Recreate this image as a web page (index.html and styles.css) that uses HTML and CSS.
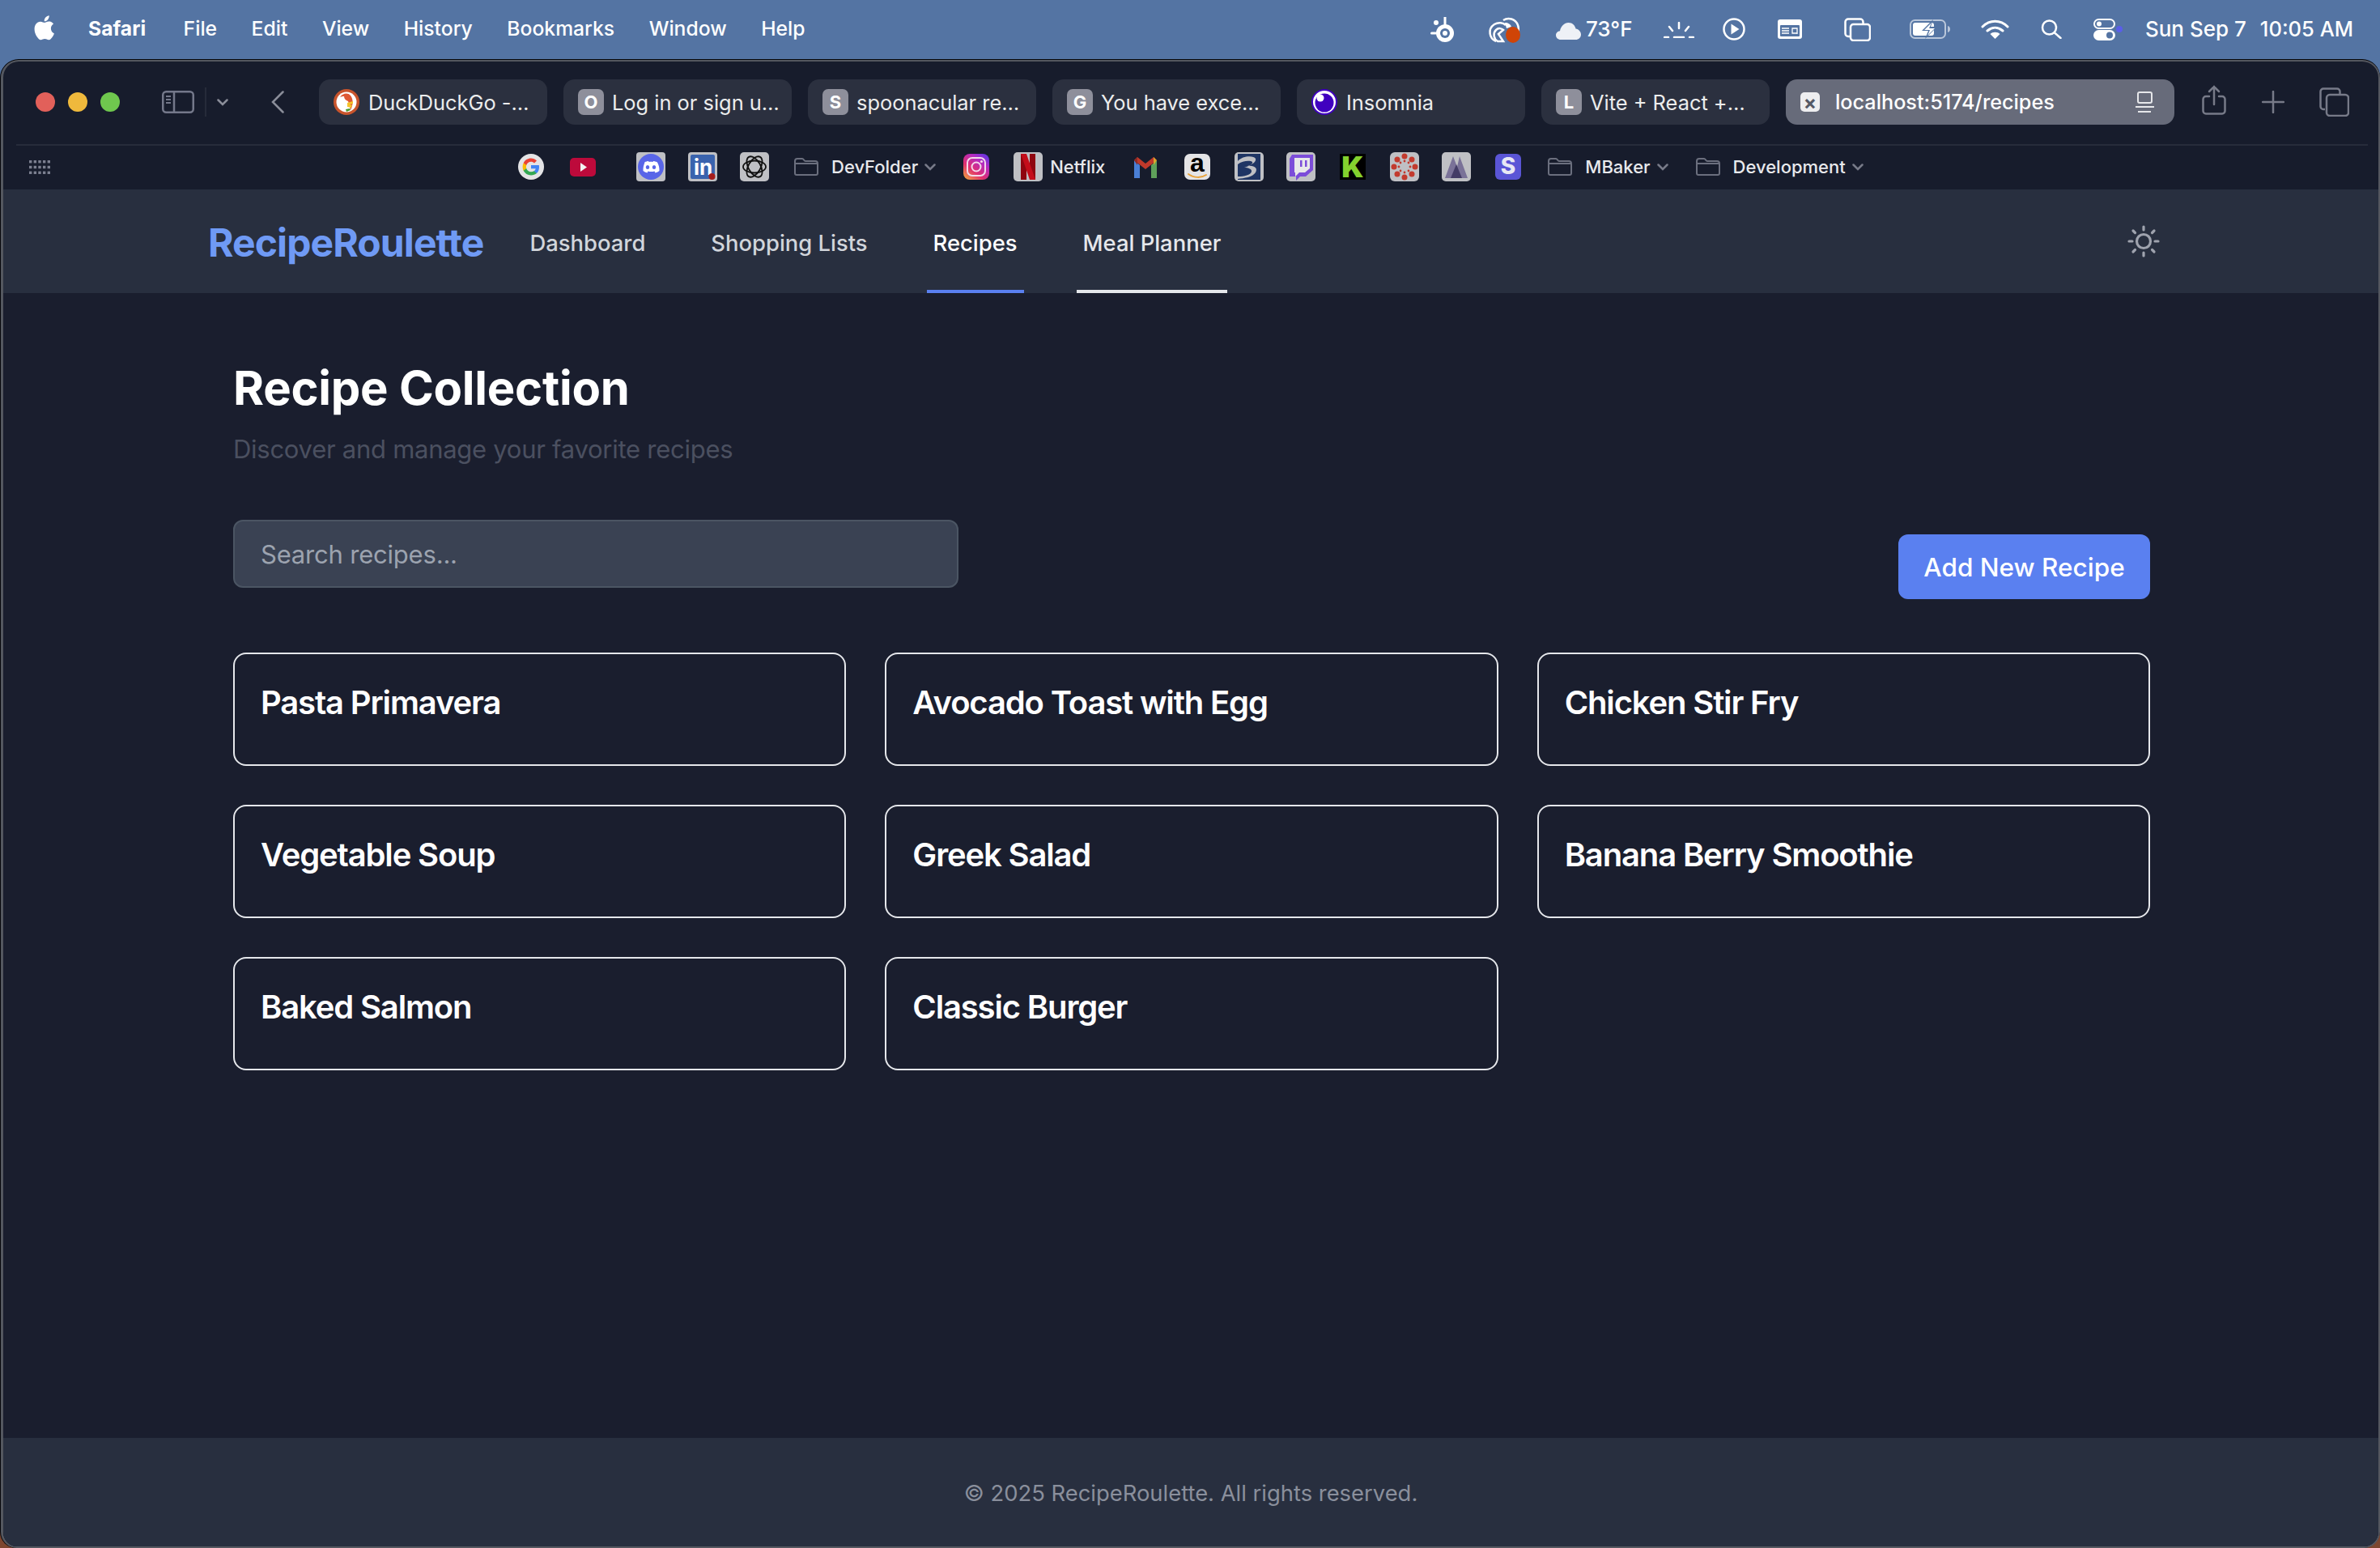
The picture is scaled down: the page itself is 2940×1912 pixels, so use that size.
FILE: index.html
```html
<!DOCTYPE html>
<html lang="en">
<head>
<meta charset="utf-8">
<title>RecipeRoulette</title>
<link rel="stylesheet" href="styles.css">
</head>
<body>
<header class="menubar">
  <svg class="apple" viewBox="2.8 2 18 20.2"><path fill="#fff" d="M18.71 19.5c-.83 1.24-1.71 2.45-3.05 2.47-1.34.03-1.77-.79-3.29-.79-1.53 0-2 .77-3.27.82-1.31.05-2.3-1.32-3.14-2.53C4.25 17 2.94 12.45 4.7 9.39c.87-1.52 2.43-2.48 4.12-2.51 1.28-.02 2.5.87 3.29.87.78 0 2.26-1.07 3.81-.91.65.03 2.47.26 3.64 1.98-.09.06-2.17 1.28-2.15 3.81.03 3.02 2.65 4.03 2.68 4.04-.03.07-.42 1.44-1.38 2.83M13 3.5c.73-.83 1.94-1.46 2.94-1.5.13 1.17-.34 2.35-1.04 3.19-.69.85-1.83 1.51-2.95 1.42-.15-1.15.41-2.35 1.05-3.11z"/></svg>
  <nav class="menu">
    <span class="menu-app">Safari</span><span>File</span><span>Edit</span><span>View</span><span>History</span><span>Bookmarks</span><span>Window</span><span>Help</span>
  </nav>
  <div class="status">
    <svg class="st st-steel" viewBox="0 0 31 32"><circle cx="18" cy="20" r="11" fill="#fff"/><circle cx="18" cy="20" r="6" fill="#5474a3"/><circle cx="18" cy="20" r="3" fill="#fff"/><rect x="16.5" y="0" width="3" height="10" fill="#fff"/><circle cx="7" cy="7" r="3" fill="#fff"/><rect x="0" y="18.500" width="8" height="3" rx="1.500" fill="#fff"/></svg>
    <svg class="st st-cc" viewBox="0 0 41 32"><g fill="none" stroke="#fff" stroke-width="2.500"><path d="M10 30C2 27-1 15 8 9c5-3 11-2 14 1"/><path d="M12 30c-5-3-6-10-2-14 3-3 7-2 9 0l-6 5 6 9z"/><path d="M19 4c6-4 15-2 18 6 1 3 1 6 0 8"/></g><path fill="#fff" d="M21 7c4 0 7 2 8 5l-6 2z"/><ellipse cx="31" cy="22" rx="9" ry="10" fill="#cf4407"/></svg>
    <svg class="st st-cloud" viewBox="0 0 31 21"><path fill="#eef1f6" d="M6 21c-3.500 0-6-2.500-6-5.500 0-3 2.200-5 5-5.300C6 4.500 10.500 0 15.500 0c5 0 8 3.500 9 7.500 3.500.5 6.500 3.500 6.500 7 0 4-3 6.500-6.500 6.500z"/></svg>
    <span class="st-temp">73°F</span>
    <svg class="st st-bright" viewBox="0 0 38 20" fill="none" stroke="#fff" stroke-width="2.500" stroke-linecap="round"><path d="M19 1v7M7 6l4 5M31 6l-4 5M1 19h5M13 19h12M32 19h5"/></svg>
    <svg class="st st-play" viewBox="0 0 28 28"><circle cx="14" cy="14" r="12.500" fill="none" stroke="#fff" stroke-width="2.500"/><path fill="#fff" d="M10.500 7.500l10 6.500-10 6.500z"/></svg>
    <svg class="st st-cmd" viewBox="0 0 30 24"><rect width="30" height="24" rx="3" fill="#fff"/><rect x="3" y="7" width="24" height="14" rx="1" fill="#5474a3"/><path stroke="#fff" stroke-width="1.600" d="M5 11h9M5 14h9M5 17h9"/><path fill="none" stroke="#fff" stroke-width="1.300" d="M18 11h6v6h-6zM18 11v-.5M24 17v1"/></svg>
    <svg class="st st-copy" viewBox="0 0 33 29" fill="none" stroke="#fff" stroke-width="2.500"><path d="M7 23H5a3.500 3.500 0 0 1-3.500-3.500V5A3.500 3.500 0 0 1 5 1.500h15A3.500 3.500 0 0 1 23.500 5v2"/><rect x="8" y="8" width="24" height="20" rx="3.500"/></svg>
    <svg class="st st-batt" viewBox="0 0 50 24"><rect x="1" y="1" width="43" height="22" rx="5.500" fill="none" stroke="#b9c6da" stroke-width="2"/><rect x="4" y="4" width="26" height="16" rx="3" fill="#fff"/><path d="M47 8c2 .5 3 2 3 4s-1 3.500-3 4z" fill="#b9c6da"/><path fill="#5474a3" d="M29 0L15 14h8l-4 10 15-15h-8z"/><path fill="#fff" d="M27 4l-9 9h7l-3 7 9-9h-7z"/></svg>
    <svg class="st st-wifi" viewBox="0 0 35 24" fill="none" stroke="#fff" stroke-width="3" stroke-linecap="round"><path d="M2 9c9-9 22-9 31 0M8 14c6-5 13-5 19 0"/><path fill="#fff" stroke="none" d="M17.500 24l-6-6c3-3 9-3 12 0z"/></svg>
    <svg class="st st-search" viewBox="0 0 26 24" fill="none" stroke="#fff" stroke-width="2.500" stroke-linecap="round"><circle cx="10.500" cy="10" r="8.500"/><path d="M17 16.500l7.500 6.500"/></svg>
    <svg class="st st-ctrl" viewBox="0 0 36 27"><rect x="1" y="1" width="25" height="11" rx="5.500" fill="none" stroke="#fff" stroke-width="2"/><circle cx="7" cy="6.500" r="3" fill="#fff"/><rect y="14" width="27" height="13" rx="6.500" fill="#fff"/><circle cx="20" cy="20.500" r="4" fill="#5474a3"/><circle cx="32" cy="13" r="4" fill="#5a5ee8"/></svg>
    <span class="st-date">Sun Sep 7</span>
    <span class="st-time">10:05 AM</span>
  </div>
</header>

<div class="window">
  <div class="toolbar">
    <span class="light light-r"></span><span class="light light-y"></span><span class="light light-g"></span>
    <svg class="tb-sidebar" viewBox="0 0 40 28" fill="none" stroke="#74788a" stroke-width="2.500"><rect x="1.250" y="1.250" width="37.500" height="25.500" rx="4"/><path d="M15 1v26"/><path stroke-width="1.800" d="M5 7h6M5 11h6M5 15h6"/></svg>
    <span class="tb-divider"></span>
    <svg class="tb-chev" viewBox="0 0 14 9" fill="none" stroke="#8a8d99" stroke-width="2.500" stroke-linecap="round"><path d="M1.500 1.500L7 7l5.500-5.500"/></svg>
    <svg class="tb-back" viewBox="0 0 16 28" fill="none" stroke="#8a8d99" stroke-width="2.500" stroke-linecap="round"><path d="M14.500 1.500L2 14l12.500 12.500"/></svg>
    <div class="tabs">
      <div class="tab">
        <svg class="favicon" viewBox="0 0 32 32"><circle cx="16" cy="16" r="16" fill="#c8542c"/><circle cx="16" cy="16" r="12.500" fill="#fff"/><path fill="#de5833" d="M8 10c3-5 10-6 13-2 4 5 3 13 0 18-1-5-2-8-3-11-3-1-5-3-5-6-2 0-3 0-5 1z"/><path fill="#f5c32c" d="M17 17l7-2v3l-4 1 3 1-1 3-5-1z"/><path fill="#4a9a2e" d="M15 25l5-1 1 2-5 2z"/></svg>
        <span class="tab-text">DuckDuckGo -…</span>
      </div>
      <div class="tab"><span class="letter">O</span><span class="tab-text">Log in or sign u…</span></div>
      <div class="tab"><span class="letter">S</span><span class="tab-text">spoonacular re…</span></div>
      <div class="tab"><span class="letter">G</span><span class="tab-text">You have exce…</span></div>
      <div class="tab">
        <svg class="favicon" viewBox="0 0 32 32"><circle cx="16" cy="16" r="15" fill="#fff" stroke="#4000bf" stroke-width="2"/><circle cx="16" cy="17" r="11.500" fill="#4000bf"/><circle cx="11" cy="11" r="4.500" fill="#fff"/></svg>
        <span class="tab-text">Insomnia</span>
      </div>
      <div class="tab"><span class="letter">L</span><span class="tab-text">Vite + React +…</span></div>
      <div class="tab tab-active">
        <span class="letter-x">×</span>
        <span class="tab-text tab-url">localhost:5174/recipes</span>
        <svg class="reader" viewBox="0 0 23 27" fill="none" stroke="#e6e7ea"><rect x="3" y="1" width="17" height="13" rx="2" stroke-width="2"/><path stroke-width="2" d="M0 19h23M3 25h16"/></svg>
      </div>
    </div>
    <svg class="tb-share" viewBox="0 0 30 37" fill="none" stroke="#777a88" stroke-width="2.500" stroke-linecap="round"><path d="M9 14H5a3.500 3.500 0 0 0-3.500 3.500V32A3.500 3.500 0 0 0 5 35.500h20a3.500 3.500 0 0 0 3.500-3.500V17.500A3.500 3.500 0 0 0 25 14h-4"/><path d="M15 24V2M9 8l6-6 6 6"/></svg>
    <svg class="tb-plus" viewBox="0 0 28 28" stroke="#777a88" stroke-width="2.500" stroke-linecap="round"><path d="M14 1v26M1 14h26"/></svg>
    <svg class="tb-copy" viewBox="0 0 37 36" fill="none" stroke="#777a88" stroke-width="2.500"><path d="M7 27H5a3.500 3.500 0 0 1-3.500-3.500V5A3.500 3.500 0 0 1 5 1.500h17A3.500 3.500 0 0 1 25.500 5v3"/><rect x="9" y="9" width="27" height="26" rx="4"/></svg>
  </div>

  <div class="bookmarks">
    <svg class="bm-grid" viewBox="0 0 23 15" fill="#7c8090"><g id="gridrow"><rect x="0" y="0" width="3" height="3"/><rect x="5" y="0" width="3" height="3"/><rect x="10" y="0" width="3" height="3"/><rect x="15" y="0" width="3" height="3"/><rect x="20" y="0" width="3" height="3"/></g><use href="#gridrow" y="6"/><use href="#gridrow" y="12"/></svg>
    <div class="bm-list">
      <svg class="fav" viewBox="0 0 36 36"><circle cx="18" cy="18" r="16" fill="#e4e4e6"/><path fill="#4285f4" d="M28 18.300c0-.8-.1-1.500-.2-2.200H18v4.200h5.700c-.3 1.300-1 2.400-2.100 3.100v2.700h3.400c2-1.800 3-4.600 3-7.800z"/><path fill="#34a853" d="M18 28.500c2.800 0 5.200-.9 7-2.500l-3.400-2.700c-1 .6-2.200 1-3.600 1-2.700 0-5-1.800-5.800-4.300H8.700v2.800c1.700 3.500 5.300 5.700 9.300 5.700z"/><path fill="#fbbc05" d="M12.200 20c-.4-1.300-.4-2.700 0-4v-2.800H8.700c-1.500 3-1.500 6.600 0 9.600z"/><path fill="#ea4335" d="M18 11.800c1.500 0 2.900.5 4 1.600l3-3C23.100 8.600 20.600 7.500 18 7.500c-4 0-7.600 2.200-9.300 5.700l3.500 2.800c.8-2.500 3.100-4.200 5.800-4.200z"/></svg>
      <svg class="fav" viewBox="0 0 36 36"><rect x="2" y="7" width="32" height="23" rx="5" fill="#bd0a3b"/><path fill="#f2f2f2" d="M15 13l8 5.500-8 5.500z"/></svg>
      <svg class="fav fav-far" viewBox="0 0 36 36"><rect width="36" height="36" rx="4" fill="#bfc0c4"/><circle cx="18" cy="18" r="16" fill="#5865e8"/><path fill="#fff" d="M10 12.500c2-1 4-1.500 5-1.500l.5 1c1.500-.2 3.500-.2 5 0l.5-1c1 0 3 .5 5 1.500 2 3.500 2.700 7 2.500 10.500-2 1.500-3.500 2-5 2.500l-1-2c-2.500.7-5.500.7-8 0l-1 2c-1.500-.5-3-1-5-2.500-.2-3.500.5-7 2-10.500z"/><ellipse cx="14" cy="18.500" rx="2.200" ry="2.500" fill="#5865e8"/><ellipse cx="22" cy="18.500" rx="2.200" ry="2.500" fill="#5865e8"/></svg>
      <svg class="fav" viewBox="0 0 36 36"><rect width="36" height="36" rx="4" fill="#bfc0c4"/><rect x="3" y="3" width="30" height="30" rx="2" fill="#3a63ae"/><text x="7" y="28" class="li-text">in</text><circle cx="29.500" cy="30" r="4" fill="#a51c1c"/></svg>
      <svg class="fav" viewBox="0 0 36 36"><rect width="36" height="36" rx="5" fill="#bfc0c4"/><g fill="none" stroke="#111" stroke-width="1.800"><ellipse cx="18" cy="18" rx="14" ry="7.500"/><ellipse cx="18" cy="18" rx="14" ry="7.500" transform="rotate(60 18 18)"/><ellipse cx="18" cy="18" rx="14" ry="7.500" transform="rotate(120 18 18)"/></g></svg>
      <div class="bm-folder">
        <svg class="folder" viewBox="0 0 30 22" fill="none" stroke="#6b6f7e" stroke-width="2"><path d="M1 5V4a3 3 0 0 1 3-3h6c2 0 2 3 4 3h12a3 3 0 0 1 3 3v12a2 2 0 0 1-2 2H3a2 2 0 0 1-2-2zM1 7h28"/></svg>
        <span class="bm-text">DevFolder</span>
        <svg class="bm-chev" viewBox="0 0 14 9" fill="none" stroke="#777a88" stroke-width="2.500" stroke-linecap="round"><path d="M1.500 1.500L7 7l5.500-5.500"/></svg>
      </div>
      <svg class="fav fav-after" viewBox="0 0 36 36"><defs><linearGradient id="ig" x1="0" y1="1" x2=".8" y2="0"><stop offset="0" stop-color="#f5b03b"/><stop offset=".4" stop-color="#e0306e"/><stop offset=".75" stop-color="#b52bc0"/><stop offset="1" stop-color="#6a34e0"/></linearGradient></defs><rect x="2" y="2" width="32" height="32" rx="8" fill="url(#ig)"/><g fill="none" stroke="#f3d9ea" stroke-width="2"><rect x="7" y="7" width="22" height="22" rx="6"/><circle cx="18" cy="18" r="5.500"/></g><circle cx="24.500" cy="11.500" r="1.600" fill="#f3d9ea"/></svg>
      <div class="bm-link">
        <svg class="fav" viewBox="0 0 36 36"><rect width="36" height="36" rx="5" fill="#bfc0c4"/><path fill="#8f0610" d="M9 2h7v32H9z"/><path fill="#8f0610" d="M20 2h7v32h-7z"/><path fill="#c40d1a" d="M9 2h7l11 32h-7z"/></svg>
        <span class="bm-text">Netflix</span>
      </div>
      <svg class="fav fav-gmail" viewBox="0 0 36 36"><path fill="#4a7fd6" d="M4 32V10l7 6v16z"/><path fill="#5fa05a" d="M32 32V10l-7 6v16z"/><path fill="#c0392b" d="M4 10l14 11 14-11-4-4-10 8L8 6z"/><path fill="#8f2a25" d="M4 10l4-4v10z"/><path fill="#d9a62e" d="M32 10l-4-4v10z"/></svg>
      <svg class="fav" viewBox="0 0 36 36"><rect x="2" y="2" width="32" height="32" rx="7" fill="#e4e4e6"/><text x="18" y="24" class="amz-text">a</text><path d="M7 27c7 5 16 5 22 1" fill="none" stroke="#e8a33a" stroke-width="2" stroke-linecap="round"/></svg>
      <svg class="fav" viewBox="0 0 36 36"><rect width="36" height="36" rx="5" fill="#bfc0c4"/><rect x="4" y="2" width="28" height="32" fill="#1f3564"/><path fill="#bfc0c4" d="M4 11c6-7 20-7 22-3 1 3-3 7-10 9 9-1 13 3 10 8-4 6-14 7-22 8v-3c8 0 16-2 17-6 1-3-4-5-9-5 7-2 11-5 10-7-2-2-12-2-18 3z"/></svg>
      <svg class="fav" viewBox="0 0 36 36"><rect width="36" height="36" rx="5" fill="#bfc0c4"/><path fill="#7c4dd9" d="M7 3h26v19l-9 8h-7l-5 5v-5H4V8z"/><path fill="#e8e8ea" d="M10 7h19v13l-6 5h-7l-5 5v-5h-1z"/><path fill="#7c4dd9" d="M17 10h2.500v8H17zM23 10h2.500v8H23z"/></svg>
      <svg class="fav" viewBox="0 0 36 36"><rect x="2" y="2" width="32" height="32" fill="#000"/><text x="18" y="30.500" class="kick-text">K</text></svg>
      <svg class="fav" viewBox="0 0 36 36"><rect width="36" height="36" rx="6" fill="#bfc0c4"/><g fill="#c23a2e"><circle cx="18" cy="5" r="3.500"/><circle cx="18" cy="31" r="3.500"/><circle cx="5" cy="18" r="3.500"/><circle cx="31" cy="18" r="3.500"/><circle cx="9" cy="9" r="3.500"/><circle cx="27" cy="9" r="3.500"/><circle cx="9" cy="27" r="3.500"/><circle cx="27" cy="27" r="3.500"/><circle cx="18" cy="11" r="1.400"/><circle cx="18" cy="25" r="1.400"/><circle cx="11" cy="18" r="1.400"/><circle cx="25" cy="18" r="1.400"/><circle cx="13" cy="13" r="1.400"/><circle cx="23" cy="13" r="1.400"/><circle cx="13" cy="23" r="1.400"/><circle cx="23" cy="23" r="1.400"/></g></svg>
      <svg class="fav" viewBox="0 0 36 36"><rect width="36" height="36" rx="5" fill="#bfc0c4"/><path fill="#7a7298" d="M4 32L14 5l5 13 3-13 10 27z"/><path fill="#433c66" d="M11 32l7-17 7 17z"/></svg>
      <svg class="fav" viewBox="0 0 36 36"><rect x="2" y="2" width="32" height="32" rx="6" fill="#5a55d6"/><text x="18" y="27" class="stripe-text">S</text></svg>
      <div class="bm-folder bm-folder-m">
        <svg class="folder" viewBox="0 0 30 22" fill="none" stroke="#6b6f7e" stroke-width="2"><path d="M1 5V4a3 3 0 0 1 3-3h6c2 0 2 3 4 3h12a3 3 0 0 1 3 3v12a2 2 0 0 1-2 2H3a2 2 0 0 1-2-2zM1 7h28"/></svg>
        <span class="bm-text">MBaker</span>
        <svg class="bm-chev" viewBox="0 0 14 9" fill="none" stroke="#777a88" stroke-width="2.500" stroke-linecap="round"><path d="M1.500 1.500L7 7l5.500-5.500"/></svg>
      </div>
      <div class="bm-folder bm-folder-d">
        <svg class="folder" viewBox="0 0 30 22" fill="none" stroke="#6b6f7e" stroke-width="2"><path d="M1 5V4a3 3 0 0 1 3-3h6c2 0 2 3 4 3h12a3 3 0 0 1 3 3v12a2 2 0 0 1-2 2H3a2 2 0 0 1-2-2zM1 7h28"/></svg>
        <span class="bm-text">Development</span>
        <svg class="bm-chev" viewBox="0 0 14 9" fill="none" stroke="#777a88" stroke-width="2.500" stroke-linecap="round"><path d="M1.500 1.500L7 7l5.500-5.500"/></svg>
      </div>
    </div>
  </div>

  <div class="app">
    <div class="app-header">
      <span class="logo">RecipeRoulette</span>
      <nav class="app-nav">
        <a class="nav-link">Dashboard</a>
        <a class="nav-link">Shopping Lists</a>
        <a class="nav-link nav-current">Recipes</a>
        <a class="nav-link nav-hover">Meal Planner</a>
      </nav>
      <svg class="sun" viewBox="0 0 40 40" fill="none" stroke="#9fa3ae" stroke-width="3.200" stroke-linecap="round"><circle cx="20" cy="20" r="8.500"/><path d="M20 2v4M20 34v4M2 20h4M34 20h4M7 7l2.500 2.500M30.500 30.500L33 33M7 33l2.500-2.500M30.500 9.500L33 7"/></svg>
    </div>
    <main class="content">
      <h1 class="title">Recipe Collection</h1>
      <p class="subtitle">Discover and manage your favorite recipes</p>
      <div class="actions">
        <input class="search" type="text" placeholder="Search recipes...">
        <button class="add-btn" type="button">Add New Recipe</button>
      </div>
      <div class="grid">
        <article class="card"><h3 class="card-title">Pasta Primavera</h3></article>
        <article class="card"><h3 class="card-title">Avocado Toast with Egg</h3></article>
        <article class="card"><h3 class="card-title">Chicken Stir Fry</h3></article>
        <article class="card"><h3 class="card-title">Vegetable Soup</h3></article>
        <article class="card"><h3 class="card-title">Greek Salad</h3></article>
        <article class="card"><h3 class="card-title">Banana Berry Smoothie</h3></article>
        <article class="card"><h3 class="card-title">Baked Salmon</h3></article>
        <article class="card"><h3 class="card-title">Classic Burger</h3></article>
      </div>
    </main>
    <footer class="app-footer">© 2025 RecipeRoulette. All rights reserved.</footer>
  </div>
</div>
</body>
</html>
```

FILE: styles.css
```css
* { box-sizing: border-box; }
html, body { height: 100%; }
body {
  margin: 0;
  height: 1912px;
  overflow: hidden;
  display: flex;
  flex-direction: column;
  font-family: Inter, "Liberation Sans", sans-serif;
  background: linear-gradient(#5474a3 0 1800px, #7d4630 1800px);
}
svg { display: block; flex: none; }

/* macOS menu bar */
.menubar {
  height: 74px;
  flex: none;
  display: flex;
  align-items: center;
  padding: 0 33px 4px 41px;
  background: #5474a3;
  color: #fff;
  font-size: 24.700px;
  font-weight: 500;
}
.apple { width: 27px; height: 31px; margin-top: -1px; }
.menu { display: flex; gap: 42.500px; margin-left: 41px; }
.menu-app { font-weight: 700; margin-right: 4px; }
.status { margin-left: auto; display: flex; align-items: center; font-size: 26px; }
.st-steel { width: 31px; height: 32px; margin-top: 3px; }
.st-cc { width: 41px; height: 32px; margin-left: 40px; margin-top: 3px; }
.st-cloud { width: 31px; height: 21px; margin-left: 43px; margin-top: 6px; }
.st-temp { margin-left: 6px; width: 57px; }
.st-bright { width: 38px; height: 20px; margin-left: 39px; margin-top: 3px; }
.st-play { width: 28px; height: 28px; margin-left: 35px; margin-top: 2px; }
.st-cmd { width: 30px; height: 24px; margin-left: 40px; margin-top: 2px; }
.st-copy { width: 33px; height: 29px; margin-left: 52px; margin-top: 3px; }
.st-batt { width: 50px; height: 24px; margin-left: 48px; margin-top: 2px; }
.st-wifi { width: 35px; height: 24px; margin-left: 38px; margin-top: 2px; }
.st-search { width: 26px; height: 24px; margin-left: 39px; margin-top: 2px; }
.st-ctrl { width: 36px; height: 27px; margin-left: 39px; margin-top: 2px; }
.st-date { margin-left: 28px; }
.st-time { margin-left: 17px; font-size: 25.500px; }

/* Safari window */
.window {
  flex: 1;
  min-height: 0;
  margin-left: 1px;
  display: flex;
  flex-direction: column;
  overflow: hidden;
  background: #171c2c;
  border: solid #54575f;
  border-width: 2px 2px 2px 3px;
  border-radius: 22px 22px 20px 20px;
  box-shadow: 0 -1px 0 #05060a, -1px 0 0 #05060a;
}
.toolbar {
  flex: none;
  height: 104px;
  margin: 0 13px 0 16px;
  padding: 0 0 2px 24px;
  display: flex;
  align-items: center;
  border-bottom: 2px solid #272c3b;
}
.light { width: 24px; height: 24px; border-radius: 50%; margin-right: 16px; flex: none; }
.light-r { background: #e2605a; }
.light-y { background: #efb93c; }
.light-g { background: #6fc74e; }
.tb-sidebar { width: 40px; height: 28px; margin-left: 36px; }
.tb-divider { width: 2px; height: 36px; margin-left: 13px; background: #262b3a; }
.tb-chev { width: 14px; height: 9px; margin-left: 13px; }
.tb-back { width: 16px; height: 28px; margin-left: 53px; }
.tabs { display: flex; gap: 20px; margin-left: 43px; }
.tab {
  width: 282px;
  height: 56px;
  padding-left: 18px;
  display: flex;
  align-items: center;
  gap: 11px;
  border-radius: 14px;
  background: #2b303f;
  color: #eceded;
  font-size: 25.400px;
}
.tab-text { white-space: nowrap; }
.favicon { width: 32px; height: 32px; }
.letter {
  width: 32px;
  height: 32px;
  flex: none;
  display: flex;
  align-items: center;
  justify-content: center;
  margin-right: -1px;
  border-radius: 7px;
  background: #8e8f9b;
  color: #fff;
  font-size: 22px;
  font-weight: 700;
}
.tab-active { width: 480px; background: #676b7a; color: #fff; gap: 19px; }
.letter-x {
  width: 24px;
  height: 24px;
  flex: none;
  display: flex;
  align-items: center;
  justify-content: center;
  border-radius: 5px;
  background: #eeeef0;
  color: #555966;
  font-size: 24px;
  font-weight: 700;
}
.tab-url { font-weight: 500; font-size: 25.200px; }
.reader { width: 23px; height: 27px; margin-left: auto; margin-right: 25px; }
.tb-share { width: 30px; height: 37px; margin-left: 34px; margin-top: -6px; }
.tb-plus { width: 28px; height: 28px; margin-left: 44px; }
.tb-copy { width: 37px; height: 36px; margin-left: 43px; }

/* Favorites bar */
.bookmarks {
  flex: none;
  height: 54px;
  padding: 0 0 2px 32px;
  display: flex;
  align-items: center;
  color: #e8e9ec;
}
.bm-grid { width: 26px; height: 17px; }
.bm-list { margin-left: 576px; display: flex; align-items: center; gap: 28px; }
.fav { width: 36px; height: 36px; overflow: visible; }
.fav-far { margin-left: 20px; }
.fav-after { margin-left: 4px; }
.fav-gmail { margin-left: 4px; }
.bm-folder, .bm-link { display: flex; align-items: center; }
.bm-folder { margin-left: 3px; }
.bm-folder-m { margin-left: 3px; }
.bm-folder-d { margin-left: 6px; }
.folder { width: 30px; height: 22px; margin-right: 16px; }
.bm-text { font-size: 22px; font-weight: 500; white-space: nowrap; }
.bm-link .bm-text { margin-left: 9px; }
.bm-chev { width: 14px; height: 9px; margin-left: 8px; }
.li-text { font: 700 26px Inter, sans-serif; fill: #fff; }
.amz-text { font: 700 32px "Liberation Sans", sans-serif; fill: #000; text-anchor: middle; }
.kick-text { font: 900 36px Inter, sans-serif; fill: #84d12e; text-anchor: middle; }
.stripe-text { font: 800 28px Inter, sans-serif; fill: #e8e8f4; text-anchor: middle; }

/* RecipeRoulette app */
.app { flex: 1; min-height: 0; display: flex; flex-direction: column; background: #1a1e2e; }
.app-header {
  flex: none;
  height: 128px;
  padding: 0 270px 0 253px;
  display: flex;
  align-items: center;
  background: #282f3f;
}
.logo { font-size: 48px; font-weight: 700; color: #6f9af5; letter-spacing: -.9px; margin-top: 2px; }
.app-nav { display: flex; align-self: stretch; gap: 65px; margin-left: 49px; }
.nav-link {
  display: flex;
  align-items: center;
  padding: 8px 8px 0;
  border-bottom: 4px solid transparent;
  color: #d1d5db;
  font-size: 27.400px;
  font-weight: 500;
}
.nav-current { color: #fff; border-bottom-color: #5a80f0; }
.nav-hover { color: #e5e7eb; border-bottom-color: #e5e7eb; }
.sun { width: 40px; height: 40px; margin-left: auto; }

.content { flex: 1; min-height: 0; padding: 81px 282px 0 284px; }
.title { margin: 0; font-size: 58px; line-height: 72px; font-weight: 700; color: #fff; letter-spacing: -.25px; }
.subtitle { margin: 16px 0 0; font-size: 31px; line-height: 48px; color: #4b5060; letter-spacing: -.27px; }
.actions {
  margin-top: 63px;
  display: flex;
  justify-content: space-between;
  align-items: flex-end;
}
.search {
  width: 896px;
  height: 84px;
  margin-bottom: 14px;
  padding: 0 32px;
  border: 2px solid #4b5563;
  border-radius: 12px;
  background: #3a4253;
  color: #fff;
  font: 400 31px Inter, sans-serif;
  letter-spacing: -.2px;
}
.search::placeholder { color: #9ca3af; opacity: 1; }
.add-btn {
  width: 311px;
  height: 80px;
  border: 0;
  border-radius: 12px;
  background: #5a80f0;
  color: #fff;
  font: 500 31.500px Inter, sans-serif;
}
.grid {
  margin-top: 66px;
  display: grid;
  grid-template-columns: repeat(3, 1fr);
  gap: 48px;
}
.card {
  height: 140px;
  padding: 32px 32px 0;
  border: 2px solid #e5e7eb;
  border-radius: 16px;
}
.card-title { margin: 0; font-size: 40px; line-height: 56px; font-weight: 600; color: #fff; letter-spacing: -1.150px; }
.app-footer {
  flex: none;
  height: 134px;
  display: flex;
  align-items: center;
  justify-content: center;
  padding-top: 2px;
  background: #282f3f;
  color: #8a8f9c;
  font-size: 27.400px;
}
```
